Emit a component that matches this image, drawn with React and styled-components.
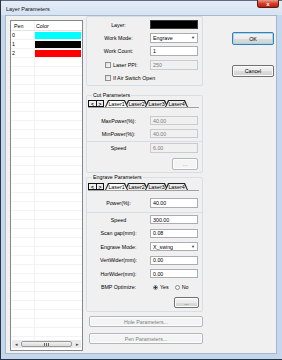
import React from 'react';
import styled, { createGlobalStyle } from 'styled-components';

const Global = createGlobalStyle`
  html, body { margin:0; padding:0; background:#fff; }
  body { font-family: "Liberation Sans", Arial, sans-serif; font-size:5.3px; color:#000; }
  * { box-sizing:border-box; }
`;

const Window = styled.div`
  width:282px;
  height:360px;
  border-left:1px solid #2a3442;
  border-bottom:1px solid #2a3442;
  background:#c4d7ed;
  display:flex;
  flex-direction:column;
`;

const TitleBar = styled.div`
  height:15px;
  display:flex;
  align-items:center;
  justify-content:space-between;
  padding:0 3px 0 5px;
  background:linear-gradient(#e4ecf6, #d6e3f2);
  border-top:1px solid #5d6b7c;
`;

const Title = styled.span`
  font-size:5.5px;
  margin-top:2px;
  color:#111;
`;

const CloseBtn = styled.div`
  align-self:flex-start;
  width:22px;
  height:8px;
  margin-top:-1px;
  border:1px solid #5a1b14;
  border-top:none;
  border-radius:0 0 3px 3px;
  background:linear-gradient(#ee9a8a, #d2402a 50%, #c01d08);
  color:#fff;
  font-size:6px;
  font-weight:bold;
  display:flex;
  align-items:center;
  justify-content:center;
  line-height:1;
`;

const Frame = styled.div`
  flex:1;
  display:flex;
  padding:0 5px 5px 4px;
`;

const Client = styled.div`
  flex:1;
  display:flex;
  background:#f0f0f0;
  border:1px solid #a8b8cb;
`;

/* ---------- pen list ---------- */

const ListBox = styled.div`
  width:73px;
  margin:4px 0 2px 4px;
  border:1px solid #828790;
  background:#fff;
  display:flex;
  flex-direction:column;
`;

const ListRow = styled.div`
  height:${p => (p.header ? 10 : 9)}px;
  display:grid;
  grid-template-columns:24px 1fr;
  align-items:center;
  border-bottom:1px solid ${p => (p.header ? '#e3e3e3' : '#f1f3f6')};
`;

const Cell = styled.span`
  padding-left:${p => (p.header ? 3 : 1)}px;
  border-right:${p => (p.divider ? '1px solid #f1f3f6' : 'none')};
  height:100%;
  display:flex;
  align-items:center;
`;

const Swatch = styled.div`
  height:7px;
  margin-right:1px;
  background:${p => p.color};
`;

const EmptyRows = styled.div`
  flex:1;
  background:
    linear-gradient(to right, transparent 23px, #f1f3f6 23px, #f1f3f6 24px, transparent 24px),
    repeating-linear-gradient(to bottom, transparent 0, transparent 8px, #f1f3f6 8px, #f1f3f6 9px);
`;

const HScroll = styled.div`
  height:8px;
  margin:0 1px 2px;
  display:flex;
  align-items:center;
  gap:1px;
  background:#eaeaea;
  font-size:5px;
  color:#444;
`;

const ScrollArrow = styled.span`
  width:8px;
  text-align:center;
`;

const Thumb = styled.div`
  flex:1;
  height:6px;
  border:1px solid #9a9a9a;
  border-radius:2px;
  background:linear-gradient(#f3f3f3, #d9d9d9);
  display:flex;
  align-items:center;
  justify-content:center;
  &::after {
    content:'';
    width:5px;
    height:3px;
    background:repeating-linear-gradient(to right, #666 0, #666 1px, transparent 1px, transparent 2px);
  }
`;

/* ---------- parameter panel ---------- */

const Panel = styled.div`
  width:117px;
  margin-left:3px;
  display:flex;
  flex-direction:column;
`;

const Group = styled.div`
  height:70px;
  border:1px solid #d5dfe5;
  border-radius:2px;
  padding-top:3px;
  display:flex;
  flex-direction:column;
  gap:3.5px;
`;

const Fieldset = styled.fieldset`
  margin:${p => p.top}px 0 0;
  padding:0;
  min-width:0;
  border:1px solid #d5dfe5;
  border-radius:2px;
  display:flex;
  flex-direction:column;
`;

const Legend = styled.legend`
  margin-left:5px;
  padding:0 1px;
  line-height:6px;
`;

const Row = styled.div`
  height:${p => p.h || 9}px;
  margin-top:${p => p.mt || 0}px;
  display:grid;
  grid-template-columns:63px 48px;
  align-items:center;
`;

const Label = styled.span`
  text-align:center;
  white-space:nowrap;
`;

const CheckLabel = styled.label`
  grid-column:${p => (p.wide ? '1 / 3' : 'auto')};
  padding-left:18px;
  display:flex;
  align-items:center;
  gap:2px;
  white-space:nowrap;
`;

const Check = styled.span`
  width:6px;
  height:6px;
  border:1px solid #8e8f8f;
  background:linear-gradient(135deg, #dcdcdc, #fbfbfb);
`;

const Field = styled.div`
  height:100%;
  border:1px solid ${p => (p.disabled ? '#c9cbcf' : '#abadb3')};
  background:${p => (p.disabled ? '#f0f0f0' : '#fff')};
  color:${p => (p.disabled ? '#7a7a7a' : '#000')};
  padding:0 2px;
  display:flex;
  align-items:center;
  justify-content:space-between;
  white-space:nowrap;
`;

const ColorField = styled.div`
  height:100%;
  background:#000;
  border:1px solid #3a3a3a;
`;

const Caret = styled.span`
  font-size:4px;
  color:#333;
`;

const Sub = styled.div`
  margin-top:${p => p.mt}px;
  border-top:1px solid #d5dfe5;
  display:flex;
  flex-direction:column;
  padding:${p => p.pad};
`;

const Button = styled.button`
  display:block;
  height:${p => p.h || 12}px;
  width:${p => (p.w ? p.w + 'px' : 'auto')};
  margin:${p => p.m || 0};
  padding:0;
  font-family:inherit;
  font-size:5.3px;
  border:1px solid ${p => (p.primary ? '#3c7fb1' : p.disabled ? '#b3b7bb' : '#707070')};
  border-radius:2px;
  color:${p => (p.disabled ? '#7e7e7e' : '#000')};
  background:${p =>
    p.disabled
      ? '#f4f4f4'
      : 'linear-gradient(#f3f3f3 0%, #ebebeb 50%, #dddddd 51%, #d0d0d0 100%)'};
  box-shadow:${p => (p.primary ? 'inset 0 0 0 1px #9fd7f5' : 'inset 0 0 0 1px #fcfcfc')};
`;

/* ---------- tab strip ---------- */

const TabStrip = styled.div`
  height:8px;
  margin:${p => p.mt}px 3px 0 1px;
  display:flex;
  overflow:hidden;
  border-bottom:1px solid #a0a0a0;
`;

const ArrowBox = styled.div`
  display:flex;
  border:1px solid #111;
  margin-right:1px;
`;

const ArrowCell = styled.span`
  width:7px;
  display:flex;
  align-items:center;
  justify-content:center;
  font-weight:bold;
  font-size:5px;
  & + & { border-left:1px solid #111; }
`;

const Tab = styled.div`
  flex:none;
  width:23px;
  margin-right:-3px;
  background:#222;
  clip-path:polygon(3px 0, calc(100% - 3px) 0, 100% 100%, 0 100%);
  padding:1px 1px 0;
  z-index:${p => (p.active ? 2 : 1)};
`;

const TabFace = styled.div`
  height:100%;
  background:${p => (p.active ? '#fff' : '#ececec')};
  clip-path:polygon(3px 0, calc(100% - 3px) 0, 100% 100%, 0 100%);
  display:flex;
  align-items:center;
  justify-content:center;
`;

const Radios = styled.div`
  display:flex;
  align-items:center;
  gap:2px;
  padding-left:3px;
`;

const Radio = styled.span`
  width:5px;
  height:5px;
  border-radius:50%;
  border:1px solid #8a8a8a;
  background:${p => (p.on ? 'radial-gradient(circle, #1d3b66 0, #1d3b66 1.2px, #fff 1.4px)' : '#fff')};
  margin-left:${p => p.ml || 0}px;
`;

const BtnCol = styled.div`
  width:42px;
  margin-left:29px;
  padding-top:16px;
`;

function Tabs({ mt }) {
  return (
    <TabStrip mt={mt}>
      <ArrowBox>
        <ArrowCell>&lt;</ArrowCell>
        <ArrowCell>&gt;</ArrowCell>
      </ArrowBox>
      {['Laser1', 'Laser2', 'Laser3', 'Laser4'].map((t, i) => (
        <Tab key={t} active={i === 0}>
          <TabFace active={i === 0}>{t}</TabFace>
        </Tab>
      ))}
    </TabStrip>
  );
}

const pens = [
  { id: 0, color: '#00ffff' },
  { id: 1, color: '#000000' },
  { id: 2, color: '#ff0000' },
];

export default function App() {
  return (
    <>
      <Global />
      <Window>
        <TitleBar>
          <Title>Layer Parameters</Title>
          <CloseBtn>x</CloseBtn>
        </TitleBar>
        <Frame>
          <Client>
            <ListBox>
              <ListRow header>
                <Cell header divider>Pen</Cell>
                <Cell>Color</Cell>
              </ListRow>
              {pens.map(p => (
                <ListRow key={p.id}>
                  <Cell divider>{p.id}</Cell>
                  <Swatch color={p.color} />
                </ListRow>
              ))}
              <EmptyRows />
              <HScroll>
                <ScrollArrow>◂</ScrollArrow>
                <Thumb />
                <ScrollArrow>▸</ScrollArrow>
              </HScroll>
            </ListBox>

            <Panel>
              <Group>
                <Row h={9}>
                  <Label>Layer:</Label>
                  <ColorField />
                </Row>
                <Row h={10}>
                  <Label>Work Mode:</Label>
                  <Field>Engrave<Caret>▼</Caret></Field>
                </Row>
                <Row h={10}>
                  <Label>Work Count:</Label>
                  <Field>1</Field>
                </Row>
                <Row h={10}>
                  <CheckLabel><Check />Laser PPI:</CheckLabel>
                  <Field disabled>250</Field>
                </Row>
                <Row h={9}>
                  <CheckLabel wide><Check />If Air Switch Open</CheckLabel>
                </Row>
              </Group>

              <Fieldset top={6}>
                <Legend>Cut Parameters</Legend>
                <Tabs mt={2} />
                <Row mt={8}>
                  <Label>MaxPower(%):</Label>
                  <Field disabled>40.00</Field>
                </Row>
                <Row mt={4}>
                  <Label>MinPower(%):</Label>
                  <Field disabled>40.00</Field>
                </Row>
                <Sub mt={3} pad="1px 0 2px">
                  <Row h={10}>
                    <Label>Speed</Label>
                    <Field disabled>6.00</Field>
                  </Row>
                  <Button disabled w={26} h={12} m="5px 0 0 85px">...</Button>
                </Sub>
              </Fieldset>

              <Fieldset top={1}>
                <Legend>Engrave Parameters</Legend>
                <Tabs mt={3} />
                <Row h={10} mt={7}>
                  <Label>Power(%):</Label>
                  <Field>40.00</Field>
                </Row>
                <Sub mt={4} pad="2px 0 3px">
                  <Row h={9}>
                    <Label>Speed</Label>
                    <Field>300.00</Field>
                  </Row>
                  <Row h={9} mt={4.5}>
                    <Label>Scan gap(mm):</Label>
                    <Field>0.08</Field>
                  </Row>
                  <Row h={9} mt={4.5}>
                    <Label>Engrave Mode:</Label>
                    <Field>X_swing<Caret>▼</Caret></Field>
                  </Row>
                  <Row h={9} mt={4.5}>
                    <Label>VertWider(mm):</Label>
                    <Field>0.00</Field>
                  </Row>
                  <Row h={9} mt={4.5}>
                    <Label>HorWider(mm):</Label>
                    <Field>0.00</Field>
                  </Row>
                  <Row h={10} mt={4}>
                    <Label>BMP Optimize:</Label>
                    <Radios>
                      <Radio on />Yes
                      <Radio ml={4} />No
                    </Radios>
                  </Row>
                  <Button w={25} h={11} m="5px 0 0 87px">...</Button>
                </Sub>
              </Fieldset>

              <Button disabled h={11} m="4px 0 0 3px">Hole Parameters...</Button>
              <Button disabled h={11} m="6px 0 0 3px">Pen Parameters...</Button>
            </Panel>

            <BtnCol>
              <Button primary h={13} w={42}>OK</Button>
              <Button h={12} w={42} m="20px 0 0">Cancel</Button>
            </BtnCol>
          </Client>
        </Frame>
      </Window>
    </>
  );
}
